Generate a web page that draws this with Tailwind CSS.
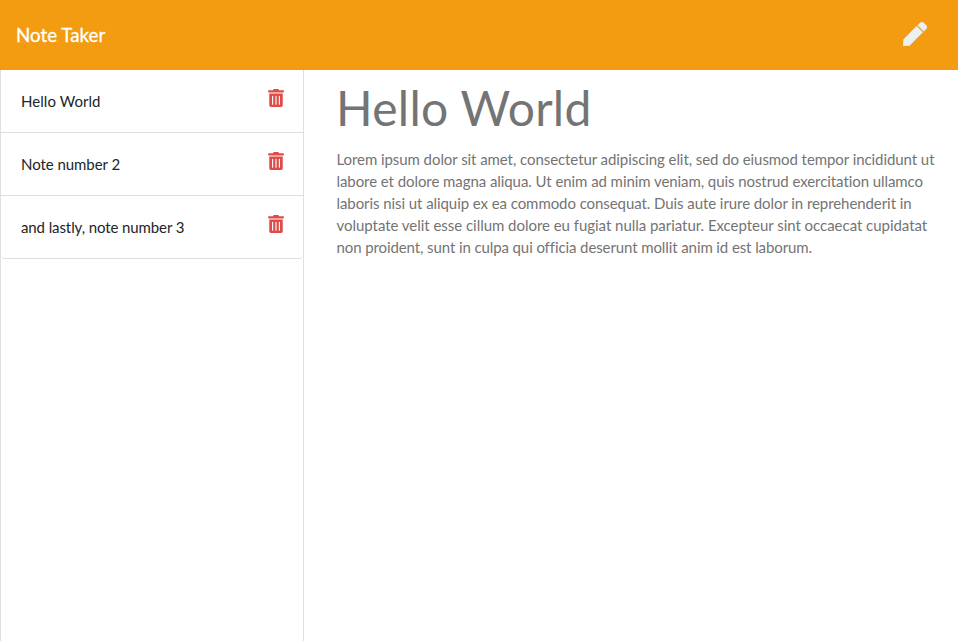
<!DOCTYPE html>
<html lang="en">
<head>
<meta charset="utf-8">
<title>Note Taker</title>
<script src="https://cdn.jsdelivr.net/npm/@tailwindcss/browser@4"></script>
</head>
<body class="h-screen overflow-hidden flex flex-col bg-white font-['Lato',sans-serif] text-[15px] leading-[22.5px] text-[#212529]">
<svg class="hidden">
<symbol id="trash" viewBox="0 0 448 512"><path fill="currentColor" d="M32 464a48 48 0 0 0 48 48h288a48 48 0 0 0 48-48V128H32zm272-256a16 16 0 0 1 32 0v224a16 16 0 0 1-32 0zm-96 0a16 16 0 0 1 32 0v224a16 16 0 0 1-32 0zm-96 0a16 16 0 0 1 32 0v224a16 16 0 0 1-32 0zM432 32H312l-9.4-18.7A24 24 0 0 0 281.1 0H166.8a23.72 23.72 0 0 0-21.4 13.3L136 32H16A16 16 0 0 0 0 48v32a16 16 0 0 0 16 16h416a16 16 0 0 0 16-16V48a16 16 0 0 0-16-16z"/></symbol>
</svg>
<nav class="h-[70px] shrink-0 bg-[#f39c12] flex items-center justify-between pl-4 pr-[31px] text-white">
<a class="text-[18.75px] leading-7 [-webkit-text-stroke:0.3px_white]">Note Taker</a>
<svg class="size-6 mb-0.5 text-[#ecf0f1]" viewBox="0 0 512 512"><path fill="currentColor" stroke="currentColor" stroke-width="10" stroke-linejoin="round" d="M290.74 93.24l128.02 128.02-277.99 277.99-114.14 12.6C11.35 513.54-1.56 500.62.14 485.34l12.7-114.22 277.9-277.88zm207.2-19.06l-60.11-60.11c-18.75-18.75-49.16-18.75-67.92 0l-56.55 56.55 128.02 128.02 56.55-56.55c18.75-18.76 18.75-49.16 0-67.91z"/></svg>
</nav>
<main class="flex flex-1 min-h-0">
<aside class="w-[304px] shrink-0 border-x border-[#dfdfdf]">
<ul>
<li class="h-[63px] flex items-center justify-between pl-5 pr-[19px] border-b border-[#dfdfdf]"><span class="tracking-[0.05px]">Hello World</span><svg class="w-4 h-[18px] mb-1.5 text-[#de4b48]"><use href="#trash"/></svg></li>
<li class="h-[63px] flex items-center justify-between pl-5 pr-[19px] border-b border-[#dfdfdf]"><span class="tracking-[-0.05px]">Note number 2</span><svg class="w-4 h-[18px] mb-1.5 text-[#de4b48]"><use href="#trash"/></svg></li>
<li class="h-[63px] flex items-center justify-between pl-5 pr-[19px] border-b border-[#dfdfdf] rounded-b"><span class="tracking-[-0.1px]">and lastly, note number 3</span><svg class="w-4 h-[18px] mb-1.5 text-[#de4b48]"><use href="#trash"/></svg></li>
</ul>
</aside>
<article class="flex-1 pl-8 pr-5 pt-[9px] text-[#747474]">
<h1 class="text-[48px] leading-[58px] tracking-[0.27px]">Hello World</h1>
<p class="mt-[11px] pl-[0.5px] leading-[22px] tracking-[-0.07px]">Lorem ipsum dolor sit amet, consectetur adipiscing elit, sed do eiusmod tempor incididunt ut labore et dolore magna aliqua. Ut enim ad minim veniam, quis nostrud exercitation ullamco laboris nisi ut aliquip ex ea commodo consequat. Duis aute irure dolor in reprehenderit in <span class="tracking-[-0.035px]">voluptate velit esse cillum dolore eu fugiat nulla pariatur. Excepteur sint occaecat cupidatat</span> <span class="tracking-[-0.1px]">non proident, sunt in culpa qui officia deserunt mollit anim id est laborum.</span></p>
</article>
</main>
</body>
</html>
